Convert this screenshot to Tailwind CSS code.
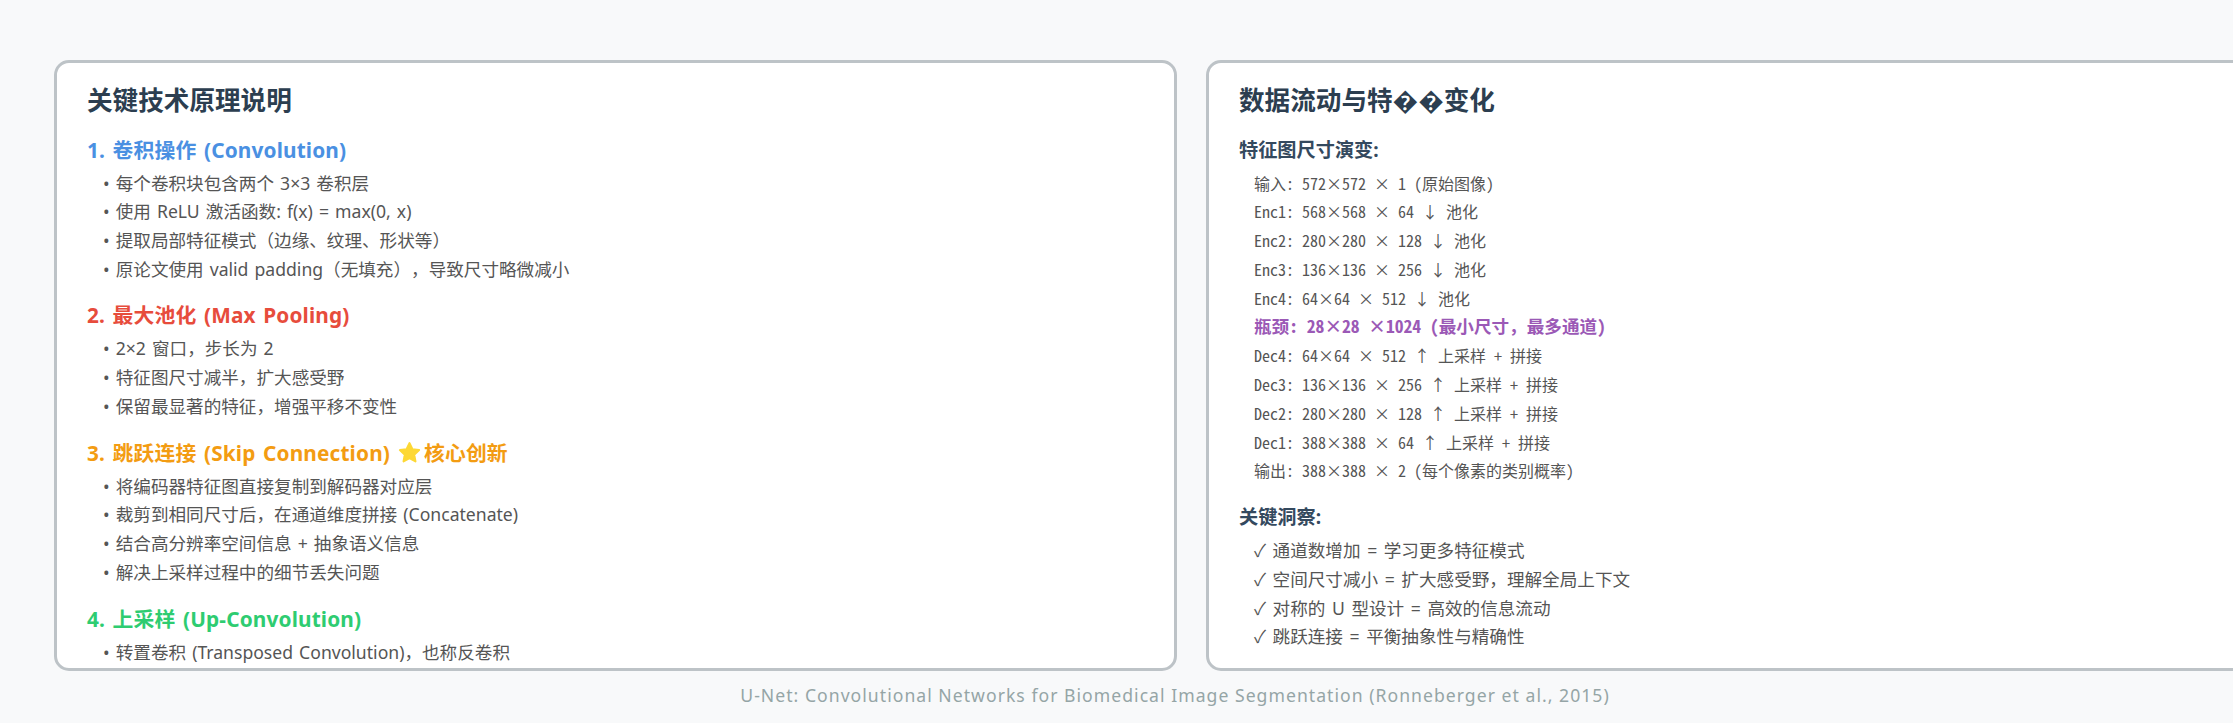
<!DOCTYPE html>
<html lang="zh-CN">
<head>
    <meta charset="UTF-8">
    <title>U-Net</title>
    <script src="https://cdn.jsdelivr.net/npm/@tailwindcss/browser@4"></script>
</head>
<body class="bg-[#f8f9fa] h-[723px] w-[2233px] overflow-hidden [text-spacing-trim:space-all] font-['Noto_Sans','Noto_Sans_CJK_SC',sans-serif]">
    <div class="pl-[54px] pt-[60px] flex gap-[29px] w-[2400px]">
        <!-- Left card -->
        <div class="w-[1123px] h-[611px] shrink-0 bg-white border-[3px] border-[#bdc3c7] rounded-[15px] overflow-hidden pl-[30px] pt-[20px]">
            <h2 class="text-[25.6px] leading-[36px] font-bold text-[#2c3e50]">关键技术原理说明</h2>
            <section class="mt-[15.5px]">
                <h3 class="text-[20.8px] leading-[30px] font-bold tracking-[0.15px] [word-spacing:2px] text-[#4a90e2]">1. 卷积操作 (Convolution)</h3>
                <ul class="mt-[4px] pl-[16px] text-[17.6px] leading-[28.8px] [word-spacing:1.5px] text-[#555]">
                    <li>• 每个卷积块包含两个 3×3 卷积层</li>
                    <li>• 使用 ReLU 激活函数: f(x) = max(0, x)</li>
                    <li>• 提取局部特征模式（边缘、纹理、形状等）</li>
                    <li>• 原论文使用 valid padding（无填充），导致尺寸略微减小</li>
                </ul>
            </section>
            <section class="mt-[16.8px]">
                <h3 class="text-[20.8px] leading-[30px] font-bold tracking-[0.15px] [word-spacing:2px] text-[#e74c3c]">2. 最大池化 (Max Pooling)</h3>
                <ul class="mt-[4px] pl-[16px] text-[17.6px] leading-[28.8px] [word-spacing:1.5px] text-[#555]">
                    <li>• 2×2 窗口，步长为 2</li>
                    <li>• 特征图尺寸减半，扩大感受野</li>
                    <li>• 保留最显著的特征，增强平移不变性</li>
                </ul>
            </section>
            <section class="mt-[16.8px]">
                <h3 class="text-[20.8px] leading-[30px] font-bold tracking-[0.15px] [word-spacing:2px] text-[#f39c12] flex items-center">
                    <span>3. 跳跃连接 (Skip Connection)</span>
                    <svg class="w-[25px] h-[25px] ml-[7px] mr-[2px]" viewBox="0 0 24 24"><path d="M12 3l2.8 5.9 6.4.8-4.7 4.4 1.2 6.4L12 17.4l-5.7 3.1 1.2-6.4-4.7-4.4 6.4-.8z" fill="#fdd835" stroke="#fdd835" stroke-width="2" stroke-linejoin="round"/></svg>
                    <span>核心创新</span>
                </h3>
                <ul class="mt-[4px] pl-[16px] text-[17.6px] leading-[28.8px] [word-spacing:1.5px] text-[#555]">
                    <li>• 将编码器特征图直接复制到解码器对应层</li>
                    <li>• 裁剪到相同尺寸后，在通道维度拼接 (Concatenate)</li>
                    <li>• 结合高分辨率空间信息 + 抽象语义信息</li>
                    <li>• 解决上采样过程中的细节丢失问题</li>
                </ul>
            </section>
            <section class="mt-[16.8px]">
                <h3 class="text-[20.8px] leading-[30px] font-bold tracking-[0.15px] [word-spacing:2px] text-[#2ecc71]">4. 上采样 (Up-Convolution)</h3>
                <ul class="mt-[4px] pl-[16px] text-[17.6px] leading-[28.8px] [word-spacing:1.5px] text-[#555]">
                    <li>• 转置卷积 (Transposed Convolution)，也称反卷积</li>
                </ul>
            </section>
        </div>
        <!-- Right card -->
        <div class="w-[1123px] h-[611px] shrink-0 bg-white border-[3px] border-[#bdc3c7] rounded-[15px] overflow-hidden pl-[30px] pt-[20px]">
            <h2 class="text-[25.6px] leading-[36px] font-bold text-[#2c3e50]">数据流动与特��变化</h2>
            <h4 class="mt-[15.5px] text-[19.2px] leading-[30px] font-bold text-[#34495e]">特征图尺寸演变:</h4>
            <div class="mt-[4px] pl-[15px] text-[16px] leading-[28.8px] text-[#555] font-['Noto_Sans_Mono_CJK_SC','Liberation_Mono','Noto_Sans_CJK_SC',monospace]">
                <div>输入: 572×572 × 1 (原始图像)</div>
                <div>Enc1: 568×568 × 64 ↓ 池化</div>
                <div>Enc2: 280×280 × 128 ↓ 池化</div>
                <div>Enc3: 136×136 × 256 ↓ 池化</div>
                <div>Enc4: 64×64 × 512 ↓ 池化</div>
                <div class="text-[17.6px] font-bold text-[#9b59b6]">瓶颈: 28×28 ×1024 (最小尺寸，最多通道)</div>
                <div>Dec4: 64×64 × 512 ↑ 上采样 + 拼接</div>
                <div>Dec3: 136×136 × 256 ↑ 上采样 + 拼接</div>
                <div>Dec2: 280×280 × 128 ↑ 上采样 + 拼接</div>
                <div>Dec1: 388×388 × 64 ↑ 上采样 + 拼接</div>
                <div>输出: 388×388 × 2 (每个像素的类别概率)</div>
            </div>
            <h4 class="mt-[16.8px] text-[19.2px] leading-[30px] font-bold text-[#34495e]">关键洞察:</h4>
            <ul class="mt-[4px] pl-[15px] text-[17.6px] leading-[28.8px] [word-spacing:2px] text-[#555]">
                <li>✓ 通道数增加 = 学习更多特征模式</li>
                <li>✓ 空间尺寸减小 = 扩大感受野，理解全局上下文</li>
                <li>✓ 对称的 U 型设计 = 高效的信息流动</li>
                <li>✓ 跳跃连接 = 平衡抽象性与精确性</li>
            </ul>
        </div>
    </div>
    <p class="mt-[9.5px] w-[2350px] text-center text-[17.6px] leading-[28px] tracking-[1.03px] text-[#95a5a6]">U-Net: Convolutional Networks for Biomedical Image Segmentation (Ronneberger et al., 2015)</p>
</body>
</html>
